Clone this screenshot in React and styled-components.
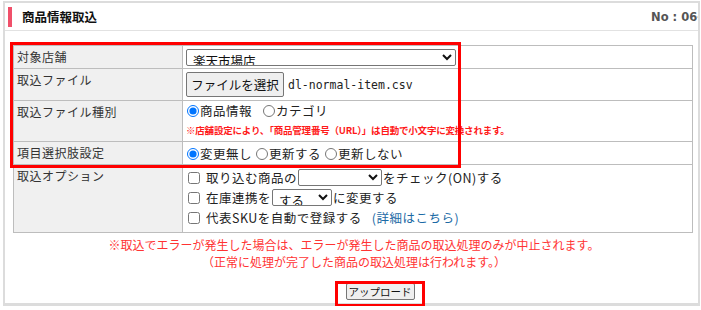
import React from "react";
import styled, { createGlobalStyle } from "styled-components";

const GlobalStyle = createGlobalStyle`
  html, body {
    margin: 0;
    padding: 0;
    background: #ffffff;
    font-family: "Noto Sans CJK JP", "Liberation Sans", sans-serif;
    color: #222;
  }
`;

const rows = [
  { label: "対象店舗", kind: "shop" },
  { label: "取込ファイル", kind: "file" },
  { label: "取込ファイル種別", kind: "type" },
  { label: "項目選択肢設定", kind: "choice" },
  { label: "取込オプション", kind: "option" },
];

function App() {
  return (
    <>
      <GlobalStyle />
      <Panel>
        <Header>
          <Marker />
          <Title>商品情報取込</Title>
          <No>No : 06-01</No>
        </Header>
        <Body>
          <Table>
            <tbody>
              {rows.map((r) => (
                <Row key={r.kind} kind={r.kind}>
                  <Label>{r.label}</Label>
                  <Cell>{renderCell(r.kind)}</Cell>
                </Row>
              ))}
            </tbody>
          </Table>
          <Notes>
            <div>※取込でエラーが発生した場合は、エラーが発生した商品の取込処理のみが中止されます。</div>
            <div>（正常に処理が完了した商品の取込処理は行われます。）</div>
          </Notes>
          <Actions>
            <UploadButton>アップロード</UploadButton>
          </Actions>
        </Body>
        <Highlight style={{ left: 5, top: 39, width: 445, height: 120 }} />
        <Highlight style={{ left: 330, top: 278, width: 84, height: 20 }} />
      </Panel>
    </>
  );
}

function renderCell(kind) {
  if (kind === "shop") {
    return (
      <Select w={270} defaultValue="r">
        <option value="r">楽天市場店</option>
      </Select>
    );
  }
  if (kind === "file") {
    return (
      <FileLine>
        <FileButton>ファイルを選択</FileButton>
        <FileName>dl-normal-item.csv</FileName>
      </FileLine>
    );
  }
  if (kind === "type") {
    return (
      <>
        <Radios>
          <RadioLabel gap={10}>
            <Radio name="type" defaultChecked />
            商品情報
          </RadioLabel>
          <RadioLabel>
            <Radio name="type" />
            カテゴリ
          </RadioLabel>
        </Radios>
        <SmallNote>※店舗設定により、「商品管理番号（URL）」は自動で小文字に変換されます。</SmallNote>
      </>
    );
  }
  if (kind === "choice") {
    return (
      <Radios>
        <RadioLabel gap={3}>
          <Radio name="choice" defaultChecked />
          変更無し
        </RadioLabel>
        <RadioLabel gap={3}>
          <Radio name="choice" />
          更新する
        </RadioLabel>
        <RadioLabel>
          <Radio name="choice" />
          更新しない
        </RadioLabel>
      </Radios>
    );
  }
  return (
    <Options>
      <OptionLine>
        <Check />
        取り込む商品の
        <Select w={84} small defaultValue="">
          <option value=""></option>
        </Select>
        をチェック(ON)する
      </OptionLine>
      <OptionLine>
        <Check />
        在庫連携を
        <Select w={60} small defaultValue="s">
          <option value="s">する</option>
        </Select>
        に変更する
      </OptionLine>
      <OptionLine>
        <Check />
        代表SKUを自動で登録する<Link>(詳細はこちら)</Link>
      </OptionLine>
    </Options>
  );
}

export default App;

const Panel = styled.div`
  position: relative;
  margin: 1px 0 0 3px;
  width: 693px;
  height: 300px;
  border: 2px solid #dcdcdc;
  border-bottom-width: 3px;
  background: #fff;
`;

const Header = styled.div`
  display: flex;
  align-items: center;
  height: 27px;
  border-bottom: 1px solid #e2e2e2;
  padding: 0 0 0 3px;
  overflow: hidden;
`;

const Marker = styled.div`
  width: 4px;
  height: 20px;
  background: #f0506a;
  margin-right: 10px;
`;

const Title = styled.div`
  font-size: 12.5px;
  font-weight: bold;
  color: #111;
  flex: 1;
`;

const No = styled.div`
  font-family: "DejaVu Sans", "Liberation Sans", sans-serif;
  font-size: 11.5px;
  font-weight: bold;
  color: #555;
  white-space: nowrap;
  margin-right: -20px;
`;

const Body = styled.div`
  padding: 14px 3px 0 8px;
`;

const Table = styled.table`
  width: 680px;
  border-collapse: collapse;
  border: 1px solid #bdbdbd;
`;

const heights = { shop: 23, file: 32, type: 41, choice: 23, option: 68 };

const Row = styled.tr`
  height: ${(p) => heights[p.kind]}px;
  border-bottom: 1px solid #bdbdbd;
`;

const Label = styled.td`
  width: 165px;
  background: #f0f0f0;
  border-right: 1px solid #bdbdbd;
  vertical-align: top;
  padding: 3px 0 0 3px;
  font-size: 12px;
  letter-spacing: 0.5px;
  line-height: 16px;
  color: #333;
`;

const Cell = styled.td`
  padding: 0 0 0 3px;
  vertical-align: middle;
  font-size: 12.5px;
  line-height: 16px;
  color: #222;
`;

const Select = styled.select`
  width: ${(p) => p.w}px;
  height: 17px;
  font-family: "Noto Sans CJK JP", sans-serif;
  font-size: 12.5px;
  padding: 0 2px;
  margin: ${(p) => (p.small ? "0 1px" : "0")};
  border: 1px solid #767676;
  border-radius: 2px;
  background: #fff;
  color: #111;
  vertical-align: middle;
`;

const FileLine = styled.div`
  display: flex;
  align-items: center;
  gap: 4px;
`;

const FileButton = styled.button`
  height: 25px;
  width: 98px;
  padding: 0;
  font-family: "Noto Sans CJK JP", sans-serif;
  font-size: 12.5px;
  color: #111;
  background: #efefef;
  border: 1px solid #767676;
  border-radius: 2px;
`;

const FileName = styled.span`
  font-family: "DejaVu Sans Mono", "Liberation Mono", monospace;
  font-size: 11.5px;
  color: #222;
`;

const Radios = styled.div`
  display: flex;
  align-items: center;
  padding-top: 1px;
`;

const RadioLabel = styled.label`
  display: inline-flex;
  align-items: center;
  margin-right: ${(p) => p.gap || 0}px;
  letter-spacing: 0.5px;
`;

const Radio = styled.input.attrs({ type: "radio" })`
  width: 12px;
  height: 12px;
  margin: 0 1px 0 1px;
`;

const SmallNote = styled.div`
  margin-top: 3px;
  font-size: 9.5px;
  font-weight: bold;
  color: #ff1a1a;
  white-space: nowrap;
  letter-spacing: -0.2px;
  padding-bottom: 3px;
`;

const Options = styled.div`
  display: flex;
  flex-direction: column;
  gap: 2px;
  padding: 2px 0 4px;
`;

const OptionLine = styled.div`
  display: flex;
  align-items: center;
  height: 18px;
  letter-spacing: 0.5px;
`;

const Check = styled.input.attrs({ type: "checkbox" })`
  width: 12px;
  height: 12px;
  margin: 0 6px 0 2px;
`;

const Link = styled.span`
  color: #1b6aa5;
  margin-left: 10px;
`;

const Notes = styled.div`
  text-align: center;
  color: #ff3333;
  font-size: 12px;
  line-height: 17px;
  padding-top: 3px;
`;

const Actions = styled.div`
  display: flex;
  justify-content: center;
  padding-top: 13px;
  padding-left: 52px;
`;

const UploadButton = styled.button`
  height: 17px;
  padding: 0 2px;
  white-space: nowrap;
  font-family: "Noto Sans CJK JP", sans-serif;
  font-size: 10.5px;
  line-height: 14px;
  color: #111;
  background: #efefef;
  border: 1px solid #767676;
  border-radius: 2px;
`;

const Highlight = styled.div`
  position: absolute;
  border: 3px solid #ff0000;
  pointer-events: none;
`;
